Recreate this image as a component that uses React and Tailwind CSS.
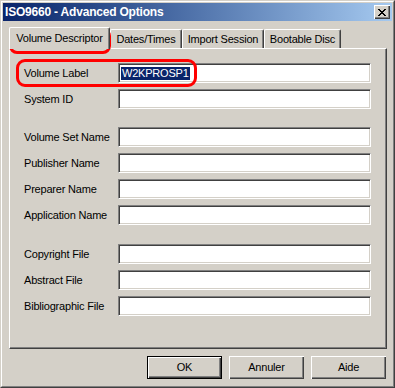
const rows = [
  { label: "Volume Label", value: "W2KPROSP1" },
  { label: "System ID" },
  { label: "Volume Set Name", gap: "mt-[12px]" },
  { label: "Publisher Name" },
  { label: "Preparer Name" },
  { label: "Application Name" },
  { label: "Copyright File", gap: "mt-[13px]" },
  { label: "Abstract File" },
  { label: "Bibliographic File" },
];

const tabs = [
  { label: "Dates/Times", w: "w-[72px]" },
  { label: "Import Session", w: "w-[82px]" },
  { label: "Bootable Disc", w: "w-[77px]" },
];

const Field = ({ value }) => (
  <div className="w-[253px] h-[20px] bg-white border border-t-[#808080] border-l-[#808080] border-r-white border-b-white shadow-[inset_1px_1px_0_#404040,inset_-1px_-1px_0_#d4d0c8] flex items-center pl-[2px]">
    {value && (
      <span className="bg-[#0a246a] text-white leading-[13px] px-px">{value}</span>
    )}
  </div>
);

const Button = ({ children, isDefault }) => (
  <button
    className={
      isDefault
        ? "w-[75px] h-[23px] border border-black bg-[#d4d0c8] shadow-[inset_1px_1px_0_#fff,inset_-1px_-1px_0_#404040,inset_-2px_-2px_0_#808080] text-black"
        : "w-[75px] h-[23px] bg-[#d4d0c8] shadow-[inset_1px_1px_0_#fff,inset_-1px_-1px_0_#404040,inset_-2px_-2px_0_#808080] text-black"
    }
  >
    {children}
  </button>
);

export default function App() {
  return (
    <div className="relative w-[395px] h-[388px] font-['Liberation_Sans',Arial,sans-serif] text-[11px] tracking-[-0.2px] text-black select-none">
      <div className="h-full bg-[#d4d0c8] border border-t-[#d4d0c8] border-l-[#d4d0c8] border-r-[#404040] border-b-[#404040]">
        <div className="h-full border border-t-white border-l-white border-r-[#808080] border-b-[#808080] p-px flex flex-col">
          {/* title bar */}
          <div className="h-[18px] flex items-center justify-between bg-gradient-to-r from-[#0a246a] to-[#a6caf0] pl-[2px] pr-[2px]">
            <span className="text-white font-bold text-[12px] leading-none">
              ISO9660 - Advanced Options
            </span>
            <div className="w-[16px] h-[14px] bg-[#d4d0c8] shadow-[inset_1px_1px_0_#fff,inset_-1px_-1px_0_#404040,inset_-2px_-2px_0_#808080] flex items-center justify-center">
              <svg width="8" height="7" viewBox="0 0 8 7">
                <path d="M0 0h2v1h-2zM6 0h2v1h-2zM1 1h2v1h-2zM5 1h2v1h-2zM2 2h4v1h-4zM3 3h2v1h-2zM2 4h4v1h-4zM1 5h2v1h-2zM5 5h2v1h-2zM0 6h2v1h-2zM6 6h2v1h-2z" fill="#000" />
              </svg>
            </div>
          </div>

          {/* tabs */}
          <div className="flex items-end h-[27px] pl-[6px]">
            <div className="relative z-10 -mb-px w-[101px] h-[22px] flex items-center justify-center bg-[#d4d0c8] border-l border-t border-l-white border-t-white border-r border-r-[#404040] rounded-t-[2px] shadow-[inset_-1px_0_0_#808080]">
              Volume Descriptor
            </div>
            {tabs.map((t) => (
              <div
                key={t.label}
                className={
                  "h-[19px] flex items-center justify-center border-l border-t border-l-white border-t-white border-r border-r-[#404040] rounded-t-[2px] shadow-[inset_-1px_0_0_#808080] " +
                  t.w
                }
              >
                {t.label}
              </div>
            ))}
          </div>

          {/* panel */}
          <div className="ml-[6px] mr-[5px] h-[301px] border border-t-white border-l-white border-r-[#404040] border-b-[#404040] shadow-[inset_-1px_-1px_0_#808080] pt-[14px] pl-[14px] flex flex-col gap-[6px]">
            {rows.map((r) => (
              <div key={r.label} className={"flex items-center " + (r.gap || "")}>
                <div className="w-[94px]">{r.label}</div>
                <Field value={r.value} />
              </div>
            ))}
          </div>

          {/* buttons */}
          <div className="flex justify-end gap-[7px] mt-[7px] pr-[6px]">
            <Button isDefault>OK</Button>
            <Button>Annuler</Button>
            <Button>Aide</Button>
          </div>
        </div>
      </div>

      {/* red annotations */}
      <div className="absolute left-[9px] top-[28px] w-[102px] h-[26px] border-[3px] border-[#ff0000] rounded-[8px]" />
      <div className="absolute left-[16px] top-[59px] w-[181px] h-[28px] border-[3px] border-[#ff0000] rounded-[9px]" />
    </div>
  );
}
